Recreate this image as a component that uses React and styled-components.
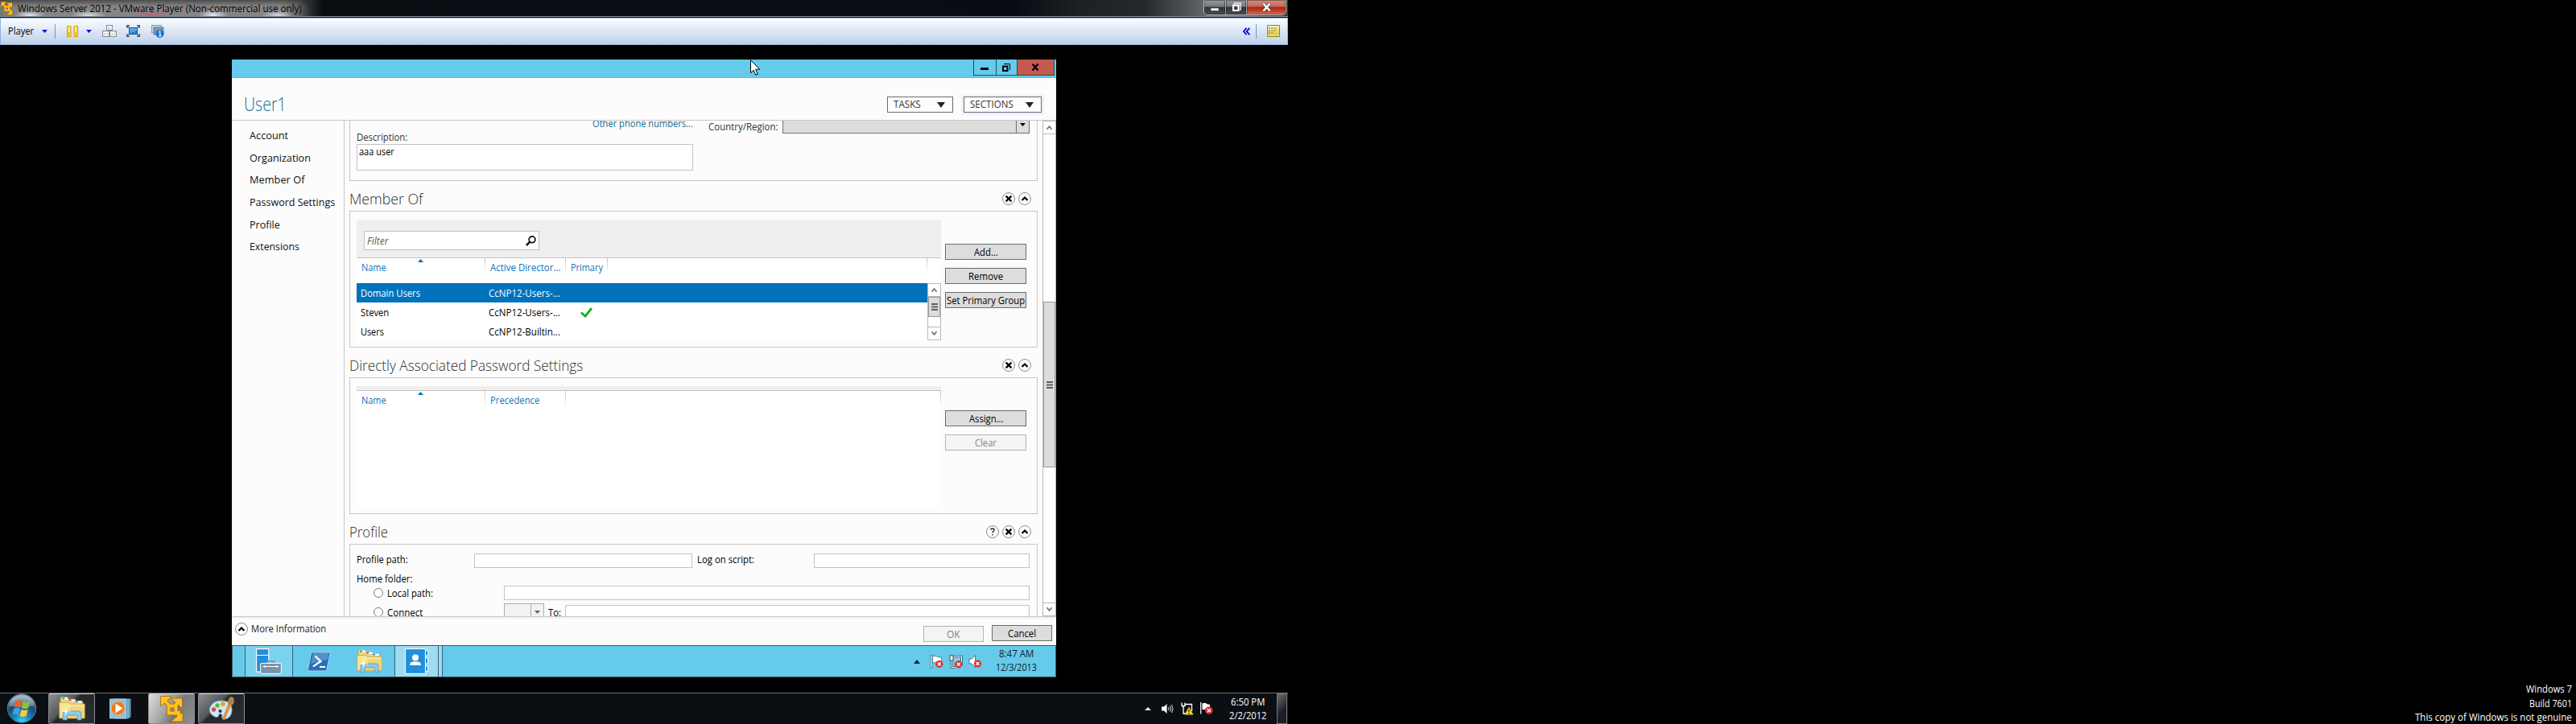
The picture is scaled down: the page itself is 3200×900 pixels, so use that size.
import React, { useLayoutEffect, useRef, useState } from "react";
import styled, { createGlobalStyle, css } from "styled-components";

const Global = createGlobalStyle`
  *, *::before, *::after { box-sizing: border-box; }
  html, body { margin: 0; padding: 0; background: #000; }
  body { width: 3200px; height: 900px; overflow: hidden; font-family: "Open Sans", "Noto Sans", sans-serif; font-size: 12px; color: #000; }
  svg { display: block; flex: none; }
`;

/* ---------- text ---------- */

const Line = styled.span`
  display: inline-block;
  white-space: pre;
  flex: none;
  font-size: ${(p) => p.$size || 12}px;
  font-weight: ${(p) => p.$weight || 400};
  font-style: ${(p) => (p.$italic ? "italic" : "normal")};
  color: ${(p) => p.$color || "inherit"};
  line-height: 16px;
  transform-origin: 0 50%;
`;

const Slot = styled.span`
  display: flex;
  align-items: center;
  flex: none;
  width: ${(p) => p.$w}px;
  height: 16px;
  line-height: 16px;
  white-space: nowrap;
`;

/* A label that tightens its glyphs so that it keeps the column width given in w. */
function Text({ w, size, weight, italic, color, children }) {
  const ref = useRef(null);
  const [scale, setScale] = useState(1);
  useLayoutEffect(() => {
    setScale(w / ref.current.offsetWidth);
  }, [w, children]);
  return (
    <Slot $w={w}>
      <Line ref={ref} $size={size} $weight={weight} $italic={italic} $color={color} style={{ transform: `scaleX(${scale})` }}>
        {children}
      </Line>
    </Slot>
  );
}

/* ---------- host desktop ---------- */

const Desktop = styled.div`
  display: grid;
  grid-template-columns: 1600px 1600px;
  width: 3200px;
  height: 900px;
  background: #000;
`;
const Primary = styled.div`
  display: flex;
  flex-direction: column;
  height: 900px;
`;
const Secondary = styled.div`
  display: flex;
  flex-direction: column;
  justify-content: flex-end;
  align-items: flex-end;
  padding: 0 5px 0 0;
  color: #fff;
`;
const MarkLine = styled.div`
  height: ${(p) => p.$h}px;
  display: flex;
  align-items: flex-start;
`;
const HostTitle = styled.div`
  display: flex;
  justify-content: space-between;
  height: 22px;
  flex: none;
  border-bottom: 1px solid #15161c;
  box-shadow: inset 0 -1px 0 #8d8f94;
  background: linear-gradient(90deg, #777 0, #858585 30px, #858585 350px, #666 370px, #2b2d30 385px, #0a0e13 400px, #080d14 1260px, #1d2024 1340px, #25282b 1420px, #55585a 1480px, #77797b 1520px, #3a3b3d 1600px);
`;
const HostCaption = styled.div`
  display: flex;
  align-items: center;
  gap: 5px;
  width: 384px;
  height: 20px;
  padding-top: 1px;
  background:
    radial-gradient(ellipse 20px 6px at 37px 19px, #dfe6f2, transparent),
    radial-gradient(ellipse 22px 6px at 110px 19px, #d5e3dc, transparent),
    radial-gradient(ellipse 26px 7px at 190px 19px, #b26a72, transparent),
    radial-gradient(ellipse 18px 7px at 265px 19px, #e2ecfb, transparent),
    radial-gradient(ellipse 20px 6px at 345px 19px, #d2dae6, transparent),
    linear-gradient(rgba(30, 30, 30, 0.55), rgba(30, 30, 30, 0) 8px);
`;
const HostControls = styled.div`
  display: flex;
  width: 103px;
  height: 19px;
  margin-right: 2px;
  border: 1px solid #b9bbbe;
  border-top: 0;
  border-radius: 0 0 5px 5px;
  overflow: hidden;
`;
const HostButton = styled.div`
  display: flex;
  align-items: center;
  justify-content: center;
  width: ${(p) => p.$w}px;
  border-right: 1px solid #a9abae;
  box-shadow: inset 0 0 0 1px rgba(0, 0, 0, 0.35);
  background: ${(p) =>
    p.$close
      ? "linear-gradient(#cf8f84 0, #c06a5c 45%, #a82412 50%, #c8442c 80%, #e0826a 100%)"
      : "linear-gradient(#97999c 0, #75787b 45%, #303336 50%, #4b4e51 100%)"};
  &:last-child { border-right: 0; }
`;
const Toolbar = styled.div`
  display: flex;
  align-items: center;
  justify-content: space-between;
  height: 34px;
  flex: none;
  padding: 0 9px 1px 9px;
  border: 1px solid #8fb0dc;
  background: linear-gradient(#fbfdfe 0, #e4edf8 35%, #d6e2f2 60%, #bed2ea 100%);
`;
const ToolGroup = styled.div`
  display: flex;
  align-items: center;
`;
const Gap = styled.span`
  flex: none;
  width: ${(p) => p.$w}px;
`;
const ToolRule = styled.span`
  width: 1px;
  height: 18px;
  background: #6f98cc;
`;
const Stage = styled.div`
  flex: none;
  height: 805px;
  padding: 18px 0 0 288px;
  background: #000;
`;

/* ---------- guest screen ---------- */

const Guest = styled.div`
  position: relative;
  display: flex;
  flex-direction: column;
  width: 1024px;
  height: 768px;
  background: #fcfcfc;
`;
const Pointer = styled.svg`
  position: absolute;
  left: 644px;
  top: 0;
`;
const GuestTitle = styled.div`
  display: flex;
  justify-content: flex-end;
  align-items: flex-start;
  height: 23px;
  flex: none;
  padding-right: 2px;
  background: #66caeb;
  border-bottom: 1px solid #72b3ce;
`;
const GuestButton = styled.div`
  display: flex;
  align-items: center;
  justify-content: center;
  width: ${(p) => p.$w}px;
  height: 20px;
  padding-right: ${(p) => (p.$close ? 1 : 2)}px;
  border: 1px solid #2b4a55;
  border-top: 0;
  border-right-width: ${(p) => (p.$close ? 1 : 0)}px;
  background: ${(p) => (p.$close ? "#c35a50" : "#66caeb")};
`;
const Header = styled.div`
  display: flex;
  justify-content: space-between;
  height: 53px;
  flex: none;
  padding: 21px 15px 0 15px;
  border-bottom: 1px solid #c9c9c9;
`;
const HeaderTitle = styled.div`
  padding-top: 3px;
`;
const HeaderMenus = styled.div`
  display: flex;
  gap: 10px;
  align-items: flex-start;
`;
const MenuButton = styled.div`
  display: flex;
  align-items: center;
  justify-content: space-between;
  width: ${(p) => p.$w}px;
  height: 20px;
  margin-top: 2px;
  margin-right: 3px;
  padding: 0 9px 0 7px;
  border: 1px solid #6c6c6c;
  background: #fdfdfd;
  box-shadow: ${(p) => (p.$focus ? "0 0 0 3px #edf1fd" : "none")};
`;
const Work = styled.div`
  display: flex;
  height: 616px;
  flex: none;
  overflow: hidden;
`;
const Nav = styled.div`
  display: flex;
  flex-direction: column;
  width: 140px;
  padding: 10px 0 0 22px;
  gap: 11.7px;
  border-right: 1px solid #c6c6c6;
  color: #111;
`;
const Sections = styled.div`
  width: 867px;
  height: 616px;
  padding: 0 6px;
  overflow: hidden;
`;
const Panel = styled.div`
  width: 855px;
  height: ${(p) => p.$h}px;
  border: 1px solid #c6c6c6;
  ${(p) => p.$open && css`border-top: 0;`}
  padding: ${(p) => p.$pad || "10px 8px 0"};
  display: flex;
`;
const SectionHead = styled.div`
  display: flex;
  align-items: center;
  justify-content: space-between;
  height: 37px;
  padding: 6px 8px 0 0;
`;
const HeadIcons = styled.div`
  display: flex;
  gap: 4px;
`;
const GeneralLeft = styled.div`
  display: flex;
  flex-direction: column;
  width: 418px;
`;
const PhoneRow = styled.div`
  display: flex;
  justify-content: flex-end;
  height: 17px;
  margin-top: -4px;
`;
const TextArea = styled.div`
  height: 33px;
  border: 1px solid #c3c3c3;
  background: #fff;
  padding: 1px 2px;
`;
const CountryRow = styled.div`
  display: flex;
  align-items: flex-start;
  padding: 0 0 0 19px;
`;
const CountryCombo = styled.div`
  display: flex;
  justify-content: flex-end;
  width: 307px;
  height: 16px;
  margin-left: 5px;
  border: 1px solid #707070;
  border-top: 0;
  background: #dddddd;
`;
const ComboArrow = styled.div`
  width: ${(p) => p.$w}px;
  border-left: 1px solid ${(p) => p.$line};
  display: flex;
  justify-content: center;
  padding-top: ${(p) => p.$top}px;
`;
const List = styled.div`
  display: flex;
  flex-direction: column;
  width: 726px;
  height: 150px;
  background: #fff;
`;
const FilterBar = styled.div`
  height: ${(p) => p.$h}px;
  flex: none;
  padding: ${(p) => (p.$h > 10 ? "14px 9px" : "0")};
  background: #efefef;
  border-bottom: 1px solid #c3c3c3;
`;
const FilterBox = styled.div`
  display: flex;
  align-items: center;
  justify-content: space-between;
  width: 218px;
  height: 24px;
  padding: 1px 3px 0 3px;
  border: 1px solid #c3c3c3;
  background: #fff;
`;
const Columns = styled.div`
  display: flex;
  height: ${(p) => p.$h}px;
  flex: none;
`;
const Column = styled.div`
  position: relative;
  width: ${(p) => p.$w}px;
  height: 20px;
  padding: 4px 0 0 6px;
  color: #0f72bc;
  background: linear-gradient(#c4c4c4, #fff) right / 1px 100% no-repeat;
`;
const SortMark = styled.svg`
  position: absolute;
  left: 76px;
  top: 1px;
`;
const ListBody = styled.div`
  display: flex;
  height: 71px;
`;
const Rows = styled.div`
  width: 709px;
`;
const Row = styled.div`
  display: grid;
  grid-template-columns: 159px 108px 60px;
  align-items: center;
  height: 24px;
  padding: 1px 0 0 5px;
  color: ${(p) => (p.$on ? "#fff" : "#000")};
  background: ${(p) => (p.$on ? "#0072bc" : "transparent")};
`;
const Cell = styled.div`
  padding-left: ${(p) => p.$l || 0}px;
`;
const Scrollbar = styled.div`
  display: flex;
  flex-direction: column;
  width: 17px;
  height: ${(p) => p.$h}px;
  border: 1px solid #b9b9b9;
  background: #fff;
`;
const ScrollEnd = styled.div`
  display: flex;
  align-items: center;
  justify-content: center;
  height: 16px;
  flex: none;
  ${(p) => (p.$down ? "border-top" : "border-bottom")}: 1px solid #b9b9b9;
`;
const Thumb = styled.div`
  display: flex;
  align-items: center;
  justify-content: center;
  flex: none;
  margin: ${(p) => p.$top}px 0 ${(p) => p.$bottom}px;
  height: ${(p) => p.$h}px;
  border: 1px solid #999;
  background: #dcdcdc;
`;
const Actions = styled.div`
  display: flex;
  flex-direction: column;
  gap: 10px;
  width: 101px;
  margin: 30px 0 0 5px;
`;
const Button = styled.div`
  display: flex;
  align-items: center;
  justify-content: center;
  width: ${(p) => p.$w || 101}px;
  height: 20px;
  padding-top: 1px;
  border: 1px solid ${(p) => (p.$off ? "#b0b5b5" : "#6c6c6c")};
  color: ${(p) => (p.$off ? "#838383" : "#000")};
  background: ${(p) => (p.$off ? "#f4f4f4" : "#dddddd")};
`;
const Form = styled.div`
  display: flex;
  flex-direction: column;
`;
const FormRow = styled.div`
  display: flex;
  height: ${(p) => p.$h}px;
  margin-top: ${(p) => p.$mt || 0}px;
  padding-left: ${(p) => p.$l || 0}px;
`;
const Lead = styled.div`
  display: flex;
  width: ${(p) => p.$w}px;
  padding-top: ${(p) => p.$t || 0}px;
  gap: 5px;
`;
const Input = styled.div`
  width: ${(p) => p.$w}px;
  height: 18px;
  border: 1px solid #c3c3c3;
  background: #fff;
  margin-top: ${(p) => p.$mt || 0}px;
`;
const DriveCombo = styled.div`
  display: flex;
  justify-content: flex-end;
  width: 50px;
  height: 20px;
  border: 1px solid #acacac;
  background: #f2f2f2;
`;
const Radio = styled.span`
  width: 12px;
  height: 12px;
  margin-top: 1px;
  border: 1px solid #7a7a7a;
  border-radius: 50%;
  background: #fff;
`;
const Footer = styled.div`
  display: flex;
  justify-content: space-between;
  height: 36px;
  flex: none;
  padding: 7px 5px 0 4px;
  border-top: 1px solid #c9c9c9;
  box-shadow: inset 0 2px 0 #f1f1f1;
`;
const More = styled.div`
  display: flex;
  gap: 4px;
`;
const DialogButtons = styled.div`
  display: flex;
  gap: 10px;
  padding-top: 3px;
`;
const Shift = styled.div`
  padding-top: ${(p) => p.$t}px;
`;
const GuestBar = styled.div`
  display: flex;
  height: 40px;
  flex: none;
  border: 1px solid #46595f;
  background: #66caeb;
  padding-left: 15px;
`;
const GuestApp = styled.div`
  display: flex;
  align-items: center;
  justify-content: center;
  width: ${(p) => p.$w}px;
  border: solid #2f6376;
  border-width: ${(p) => (p.$edge ? "0 1px" : "0")};
  background: ${(p) => p.$bg || "transparent"};
`;
const GuestStack = styled.div`
  width: 5px;
  background: #9fdcf1;
  border-right: 1px solid #2f6376;
`;
const GuestTray = styled.div`
  display: flex;
  margin-left: auto;
  color: #0c222c;
`;
const GuestClock = styled.div`
  display: flex;
  flex-direction: column;
  align-items: center;
  gap: 1px;
  width: 84px;
  padding-top: 2px;
`;
const TrayIcons = styled.div`
  display: flex;
  align-items: center;
`;

/* ---------- host taskbar ---------- */

const HostBar = styled.div`
  display: flex;
  height: 39px;
  flex: none;
  border-top: 1px solid #6b6e72;
  background: #0b0f14;
  color: #fff;
`;
const Start = styled.div`
  width: 60px;
  padding-left: 8px;
`;
const HostApp = styled.div`
  display: flex;
  align-items: center;
  justify-content: center;
  width: 58px;
  height: 38px;
  margin-right: 4px;
  padding-right: ${(p) => p.$nudge || 0}px;
  border-radius: 2px;
  border: 1px solid ${(p) => (p.$kind ? "#8b8d90" : "transparent")};
  border-top-color: ${(p) => (p.$kind ? "#d0d0d0" : "transparent")};
  background: ${(p) =>
    p.$kind === "active"
      ? "linear-gradient(120deg, #dedede 0, #a5a5a5 40%, #77797b 60%, #8c8e90 100%)"
      : p.$kind === "open"
      ? "linear-gradient(135deg, #8d8f92 0, #55585b 38%, #24272a 45%, #2b2e31 100%)"
      : "transparent"};
`;
const HostTray = styled.div`
  display: flex;
  margin-left: auto;
`;
const HostClock = styled.div`
  display: flex;
  flex-direction: column;
  align-items: center;
  gap: 1px;
  width: 72px;
  padding-top: 3px;
`;
const ShowDesktop = styled.div`
  width: 13px;
  margin-right: 1px;
  border: 1px solid #77797c;
  background: linear-gradient(135deg, #6b6e71, #1b1e22 60%);
`;

/* ---------- drawings ---------- */

const Tri = ({ w, h, color, up }) => (
  <svg width={w} height={h} viewBox="0 0 10 10" preserveAspectRatio="none">
    <path d={up ? "M0 10 5 0l5 10z" : "M0 0h10L5 10z"} fill={color} />
  </svg>
);
const Chevron = ({ down }) => (
  <svg width="9" height="7" viewBox="0 0 9 7">
    <path d={down ? "M1.5 1.2 4.5 5l3-3.8" : "M1.5 5.8l3-3.8 3 3.8"} fill="none" stroke="#707070" strokeWidth="1.7" />
  </svg>
);
const Grip = () => (
  <svg width="8" height="9" viewBox="0 0 8 9">
    <path d="M0 1h8M0 4.500h8M0 8h8" stroke="#606060" strokeWidth="2" />
  </svg>
);
const Round = ({ kind }) => (
  <svg width="16" height="16" viewBox="0 0 16 16">
    <circle cx="8" cy="8" r="7.500" fill="#fdfdfd" stroke="#8c8c8c" />
    {kind === "x" && <path d="M4.600 4.600l6.800 6.800M11.400 4.600l-6.800 6.800" stroke="#000" strokeWidth="2.200" />}
    {kind === "up" && <path d="M4.500 10 8 6.500l3.500 3.500" fill="none" stroke="#000" strokeWidth="2.200" />}
    {kind === "help" && (
      <path d="M5.900 5.600C6 3.400 10.200 3.400 10 5.700 9.900 7.300 8 7.300 8 9.600M8 11v1.600" fill="none" stroke="#222" strokeWidth="1.400" />
    )}
  </svg>
);
const VmArrows = () => (
  <>
    <path d="M10.500 12.500h9v9h-9z" />
    <path d="M5 5l6 7M23 7l-5 6M19 21h4v7" />
  </>
);
const VmHeads = () => <path d="M1 1h12l-3 3.500L4.500 9.500 1 12zM27 3.500V15l-4-3.500-5-4.500-4-3.500zM27.500 31.500H14.500l4-3.500 4.500-3 4.500-4z" />;
const VmLogo = ({ size }) => (
  <svg width={size} height={size} viewBox="0 0 29 33">
    <g fill="none" stroke="#a86a05" strokeWidth="5.600"><VmArrows /></g>
    <g fill="#a86a05" stroke="#a86a05" strokeWidth="1.600"><VmHeads /></g>
    <g fill="none" stroke="#ffc024" strokeWidth="3.800"><VmArrows /></g>
    <g fill="#ffc024"><VmHeads /></g>
  </svg>
);
const PauseIcon = () => (
  <svg width="14" height="14" viewBox="0 0 14 14">
    <path d="M.5.5h4.500v13H.5zM9 .5h4.500v13H9z" fill="#fbe27a" stroke="#d49b08" />
    <path d="M1 8h4v5H1zM9.500 8h4v5h-4z" fill="#f3c613" />
  </svg>
);
const KeysIcon = () => (
  <svg width="18" height="15" viewBox="0 0 18 15">
    <g fill="#e8e8ea" stroke="#8b8d92">
      <rect x="5.500" y=".5" width="7" height="6" />
      <rect x=".5" y="7.500" width="8" height="7" />
      <rect x="9.500" y="7.500" width="8" height="7" />
    </g>
    <path d="M7.500 2.500h3M2.500 9.500h3M11.500 9.500h3" stroke="#fff" strokeWidth="2" />
    <path d="M8 3.500h1M3 10.500h1M12 10.500h1" stroke="#999" />
  </svg>
);
const FullIcon = () => (
  <svg width="17" height="15" viewBox="0 0 17 15">
    <rect x="3.500" y="3.500" width="10" height="8" fill="#2a7fd6" stroke="#17539e" />
    <path d="M4 4h9v3L4 10z" fill="#5aa5ea" />
    <path d="M.7 4V.7H4M13 .7h3.300V4M.7 11v3.300H4M13 14.300h3.300V11M1 1l2 2M16 1l-2 2M1 14l2-2M16 14l-2-2" fill="none" stroke="#46566a" strokeWidth="1.300" />
  </svg>
);
const InfoIcon = () => (
  <svg width="16" height="16" viewBox="0 0 16 16">
    <rect x=".5" y=".5" width="12" height="9" fill="#cdd6e2" stroke="#8a99ad" />
    <rect x="3" y="3" width="12" height="9" fill="#8395ad" stroke="#6c7f98" />
    <circle cx="10.500" cy="11" r="5" fill="#1b73cb" />
    <path d="M9.300 10h1.700v3.500M9 13.700h3.500" fill="none" stroke="#fff" strokeWidth="1.200" />
    <circle cx="10.500" cy="8" r=".9" fill="#fff" />
  </svg>
);
const NoteIcon = () => (
  <svg width="16" height="15" viewBox="0 0 16 15">
    <path d="M.5.5h15v14H.5z" fill="#e6d964" stroke="#8c8432" />
    <path d="M1 1h14v3L1 7z" fill="#f4edb0" />
    <path d="M2 4.200h2M2 10.200h2" stroke="#d86a4b" strokeWidth="1.600" />
    <path d="M2 7.200h2" stroke="#5a8cd8" strokeWidth="1.600" />
    <path d="M5 4h7M5 7h6M5 10h4" stroke="#837b3e" strokeDasharray="2 .7" />
    <path d="M11 14v-3h4" fill="#fff8c4" stroke="#b9ae50" />
  </svg>
);
const FolderIcon = ({ w, h }) => (
  <svg width={w} height={h} viewBox="0 0 32 29">
    <path d="M2 2h8l1 2h8l1 2h9v20H2z" fill="#f1d778" stroke="#b5973c" strokeWidth=".8" />
    <path d="M3 .8h8v3H3zM11 3h9v3h-9zM19 5h9v3h-9z" fill="#fff" stroke="#c9b878" strokeWidth=".5" />
    <path d="M4 1.300h3v1.800H4z" fill="#21b036" />
    <path d="M12 3.300h3v1.800h-3z" fill="#d4412c" />
    <path d="M20 5.300h3v1.800h-3z" fill="#2f8fe0" />
    <path d="M.8 7h11l2 1.800h17.400V26H.8z" fill="#f9e694" stroke="#c4a44c" strokeWidth=".8" />
    <path d="M14 12h17v14H8z" fill="#ecca62" opacity=".6" />
    <path d="M5 28V20.500Q5 17.500 8 17.500H24Q27 17.500 27 20.500V28H22.500V22.500H10V28z" fill="#8ecbe8" stroke="#4f9cc6" strokeWidth=".8" />
    <path d="M8.500 12.500v10M4 17.500h10" stroke="#fff" strokeWidth=".9" />
    <circle cx="8.500" cy="17.500" r="1.800" fill="#fff" />
  </svg>
);
const RedX = ({ x, y, r = 4.6 }) => (
  <g>
    <circle cx={x} cy={y} r={r} fill="#dd2a2a" />
    <path d={`M${x - 2} ${y - 2}l4 4M${x + 2} ${y - 2}l-4 4`} stroke="#fff" strokeWidth="1.5" />
  </g>
);
const Search = () => (
  <svg width="13" height="13" viewBox="0 0 13 13">
    <circle cx="8" cy="4.800" r="3.900" fill="none" stroke="#111" strokeWidth="1.700" />
    <path d="M5.300 7.600.9 12" stroke="#111" strokeWidth="2.500" />
  </svg>
);
const Check = () => (
  <svg width="15" height="13" viewBox="0 0 15 13">
    <path d="M1 6.500l5 4.500L14 1.200" fill="none" stroke="#0caf10" strokeWidth="2.700" />
  </svg>
);
const ServerIcon = () => (
  <svg width="32" height="32" viewBox="0 0 32 32">
    <path d="M.6.6h15.200v28.500H.6z" fill="#218fdc" stroke="#fff" strokeWidth="1.100" />
    <path d="M.6 8.500h15.200" stroke="#fff" />
    <path d="M14.500 18v-2h8v2" fill="none" stroke="#8094a8" strokeWidth="2" />
    <rect x="5.600" y="18.500" width="25.800" height="12.900" rx="1.500" fill="#7a93ab" stroke="#fff" />
    <path d="M8.500 22.500h19.500" stroke="#fff" />
    <circle cx="11" cy="22.500" r="1.200" fill="#fff" />
    <circle cx="26" cy="22.500" r="1.200" fill="#fff" />
  </svg>
);
const ShellIcon = () => (
  <svg width="30" height="25" viewBox="0 0 30 25">
    <path d="M7 1h21q1.500 0 1 1.500L25 22q-.4 2-2 2H3q-2 0-1.500-2L5.500 2.500Q6 1 7 1z" fill="#2b6fb5" stroke="#a8d2ee" />
    <path d="M8 2h19.500L26 10Q15 12 5 15z" fill="#5f9fd6" opacity=".7" />
    <path d="M10.500 5.500l7 6.500-9.500 6.500M16 19h7" fill="none" stroke="#fff" strokeWidth="2.200" />
  </svg>
);
const ContactsIcon = () => (
  <svg width="30" height="32" viewBox="0 0 30 32">
    <path d="M25.500 2.500h3V9h-3zM25.500 12h3v7h-3zM25.500 22h3v6.500h-3z" fill="#218fdc" stroke="#fff" />
    <rect x=".6" y=".6" width="24.800" height="30.800" fill="#218fdc" stroke="#fff" />
    <circle cx="13" cy="11.500" r="4" fill="#fff" />
    <path d="M6 21q0-4.500 4.500-4.500h5Q20 16.500 20 21z" fill="#fff" />
  </svg>
);
const GuestFlag = () => (
  <svg width="17" height="17" viewBox="0 0 17 17">
    <path d="M1 .5h2v15.500H1z" fill="#fff" stroke="#3d6d80" strokeWidth=".8" />
    <path d="M3.500 2q3-1.500 5 0t6 1v7h-6q-2-1-5 0z" fill="#fff" stroke="#3d6d80" strokeWidth=".8" />
    <RedX x={11.800} y={11.500} />
  </svg>
);
const GuestNet = () => (
  <svg width="17" height="17" viewBox="0 0 17 17">
    <path d="M5 2h10.500v9.500H6" fill="#7fd0ea" stroke="#2b5568" strokeWidth="2.600" />
    <path d="M3 6v9.500h5" fill="none" stroke="#2b5568" strokeWidth="2.600" />
    <path d="M5 2h10.500v9.500H6M3 6v9.500h5" fill="none" stroke="#fff" strokeWidth="1" />
    <rect x="1" y="1" width="4" height="6" fill="#fff" stroke="#2b5568" />
    <RedX x={11.800} y={11.800} />
  </svg>
);
const GuestSound = () => (
  <svg width="17" height="17" viewBox="0 0 17 17">
    <path d="M1 5h3l4.500-4.500v15L4 11H1z" fill="#fff" stroke="#3d6d80" strokeWidth=".9" />
    <RedX x={11.500} y={11} />
  </svg>
);
const Orb = () => (
  <svg width="38" height="38" viewBox="0 0 38 38">
    <defs>
      <radialGradient id="orb" cx="50%" cy="95%" r="85%">
        <stop offset="0" stopColor="#2fd6ff" />
        <stop offset=".35" stopColor="#1583bb" />
        <stop offset=".7" stopColor="#1b4a6e" />
        <stop offset="1" stopColor="#7f9db3" />
      </radialGradient>
    </defs>
    <circle cx="19" cy="18.500" r="17.700" fill="url(#orb)" stroke="#5b7a8c" />
    <path d="M4 15a15 13 0 0 1 30 0q-15 5-30 0z" fill="#fff" opacity=".25" />
    <path d="M11.500 9.500q4-2.500 8 0l-2 8q-4-2.500-8 0z" fill="#e8612a" />
    <path d="M20.800 10q4 2.300 8.200.3l-2 8q-4 2-8.200-.3z" fill="#8fc33c" />
    <path d="M9.200 19q4-2.500 8 0l-2 8q-4-2.500-8 0z" fill="#3f9fe0" />
    <path d="M18.500 19.700q4 2.300 8.200.3l-2 8q-4 2-8.200-.3z" fill="#f8c93a" />
  </svg>
);
const MediaIcon = () => (
  <svg width="27" height="26" viewBox="0 0 27 26">
    <path d="M4 1h22v22l-3 2H6z" fill="#4a8fb8" stroke="#9bd0ea" strokeWidth=".7" />
    <path d="M23 2v22" stroke="#b8e0f2" />
    <path d="M.5 1h20v24H.5z" fill="#8dc0dd" stroke="#b9dff0" strokeWidth=".8" />
    <circle cx="10.500" cy="12.500" r="8.500" fill="#ee7a1c" stroke="#fbc07f" strokeWidth=".8" />
    <path d="M7.500 6.500l9 6-9 6z" fill="#fff" />
  </svg>
);
const PaintIcon = () => (
  <svg width="33" height="32" viewBox="0 0 33 32">
    <path d="M2 14Q6 5 18 6q12 1 11 13-1 9-9 10-4 0-3-4 0-4-4-2-1 5-5 3Q-1 22 2 14z" fill="#cfe6f3" stroke="#6ba7c8" />
    <circle cx="6.500" cy="17" r="2.700" fill="#e24a35" />
    <circle cx="11" cy="12" r="2.700" fill="#5bb54b" />
    <circle cx="18" cy="10" r="2.900" fill="#efa62c" />
    <circle cx="14.500" cy="19" r="2" fill="#18354a" />
    <path d="M29 9 19.500 30l-2-1L25.500 8z" fill="#e99a3c" stroke="#b56b1d" strokeWidth=".6" />
    <path d="M24 8q0-6 5-7 4 2 2.500 8-1.500 3-4 2.500-3 0-3.500-3.500z" fill="#b5824e" />
  </svg>
);
const HostSound = () => (
  <svg width="15" height="14" viewBox="0 0 15 14">
    <path d="M0 4.500h3L6.500 1v12L3 9.500H0z" fill="#fff" />
    <path d="M8.500 5q1 2 0 4M10.500 3.500q2 3.500 0 7M12.500 2q3 5 0 10" fill="none" stroke="#ddd" strokeWidth="1" />
  </svg>
);
const HostNet = () => (
  <svg width="16" height="16" viewBox="0 0 16 16">
    <path d="M5 2.500h8.500V11M3 6v8h4" fill="none" stroke="#fff" strokeWidth="1.300" />
    <path d="M1 .5v4h4v-4M3 4v3" fill="none" stroke="#fff" strokeWidth="1.300" />
    <path d="M10 5.500l5.500 10h-11z" fill="#f6cf25" />
    <path d="M10 9v3M10 13v1.500" stroke="#222" strokeWidth="1.300" />
  </svg>
);
const HostFlag = () => (
  <svg width="16" height="16" viewBox="0 0 16 16">
    <path d="M.7 0v14.500" stroke="#fff" strokeWidth="1.200" />
    <path d="M2.500 1.500q3-1.500 5 0t4.500 1.200V9H2.500z" fill="#fff" />
    <RedX x={10.800} y={10.200} r={4.800} />
  </svg>
);

/* ---------- data ---------- */

const NAV = [["Account", 48], ["Organization", 76], ["Member Of", 68], ["Password Settings", 106], ["Profile", 37.5], ["Extensions", 61.5]];
const GROUPS = [
  { name: "Domain Users", nw: 74, folder: "CcNP12-Users-...", on: true },
  { name: "Steven", nw: 35.5, folder: "CcNP12-Users-...", primary: true },
  { name: "Users", nw: 29, folder: "CcNP12-Builtin..." },
];

const SectionTitle = ({ title, w, icons }) => (
  <SectionHead>
    <Text w={w} size={18.5} weight={300} color="#2c2c2c">{title}</Text>
    <HeadIcons>{icons.map((k) => <Round key={k} kind={k} />)}</HeadIcons>
  </SectionHead>
);

export default function App() {
  return (
    <>
      <Global />
      <Desktop>
        <Primary>
          <HostTitle>
            <HostCaption>
              <VmLogo size={17} />
              <Text w={353} size={12} color="#000">Windows Server 2012 - VMware Player (Non-commercial use only)</Text>
            </HostCaption>
            <HostControls>
              <HostButton $w={27}>
                <svg width="12" height="12" viewBox="0 0 12 12"><path d="M1 7h10v3.500H1z" fill="#fff" stroke="#444" strokeWidth=".7" /></svg>
              </HostButton>
              <HostButton $w={26}>
                <svg width="12" height="12" viewBox="0 0 12 12"><path d="M3.500 2V.8h7.700v8H10" fill="none" stroke="#fff" strokeWidth="1.200" /><path d="M2 3.500h6.500v6.500H2z" fill="none" stroke="#fff" strokeWidth="2.200" /></svg>
              </HostButton>
              <HostButton $w={48} $close>
                <svg width="13" height="12" viewBox="0 0 13 12"><path d="M2.500 1.500l8 9M10.500 1.500l-8 9" stroke="#444" strokeWidth="4" /><path d="M2.500 1.500l8 9M10.500 1.500l-8 9" stroke="#fff" strokeWidth="2.600" /></svg>
              </HostButton>
            </HostControls>
          </HostTitle>
          <Toolbar>
            <ToolGroup>
              <Text w={32.500} size={12}>Player</Text>
              <Gap $w={9.500} />
              <Tri w={7} h={4} color="#1010c8" />
              <Gap $w={9} />
              <ToolRule />
              <Gap $w={14} />
              <PauseIcon />
              <Gap $w={10} />
              <Tri w={7} h={4} color="#1010c8" />
              <Gap $w={13} />
              <KeysIcon />
              <Gap $w={12} />
              <FullIcon />
              <Gap $w={14} />
              <InfoIcon />
            </ToolGroup>
            <ToolGroup>
              <svg width="9" height="10" viewBox="0 0 9 10"><path d="M4.500.8.900 5l3.600 4.200M8.300.8 4.700 5l3.600 4.200" fill="none" stroke="#0000e0" strokeWidth="1.800" /></svg>
              <Gap $w={7} />
              <ToolRule />
              <Gap $w={13} />
              <NoteIcon />
            </ToolGroup>
          </Toolbar>
          <Stage>
            <Guest>
              <GuestTitle>
                <GuestButton $w={28}>
                  <svg width="10" height="8" viewBox="0 0 10 8"><path d="M0 4h10v3H0z" /></svg>
                </GuestButton>
                <GuestButton $w={26}>
                  <svg width="10" height="10" viewBox="0 0 10 10"><path d="M1 3.500h5.500V9H1z" fill="none" stroke="#000" strokeWidth="2" /><path d="M2 .5h7.500V8" fill="none" stroke="#000" /></svg>
                </GuestButton>
                <GuestButton $w={47} $close>
                  <svg width="10" height="9" viewBox="0 0 10 9"><path d="M1.500.5l7 8M8.500.5l-7 8" stroke="#000" strokeWidth="2.200" /></svg>
                </GuestButton>
              </GuestTitle>
              <Header>
                <HeaderTitle>
                  <Text w={53} size={24} weight={300} color="#146d8c">User1</Text>
                </HeaderTitle>
                <HeaderMenus>
                  <MenuButton $w={82}><Text w={34} color="#333">TASKS</Text><Tri w={10} h={7} color="#222" /></MenuButton>
                  <MenuButton $w={97} $focus><Text w={54} color="#333">SECTIONS</Text><Tri w={10} h={7} color="#222" /></MenuButton>
                </HeaderMenus>
              </Header>
              <Work>
                <Nav>
                  {NAV.map(([t, w]) => <Text key={t} w={w} size={13}>{t}</Text>)}
                </Nav>
                <Sections>
                  <Panel $h={75} $open $pad="0 8px">
                    <GeneralLeft>
                      <PhoneRow><Text w={125} color="#146d8c">Other phone numbers...</Text></PhoneRow>
                      <Text w={63} color="#333">Description:</Text>
                      <TextArea><Text w={44}>aaa user</Text></TextArea>
                    </GeneralLeft>
                    <CountryRow>
                      <Shift $t={-2}><Text w={87} color="#333">Country/Region:</Text></Shift>
                      <CountryCombo>
                        <ComboArrow $w={16} $line="#707070" $top={3}><Tri w={7} h={4} color="#000" /></ComboArrow>
                      </CountryCombo>
                    </CountryRow>
                  </Panel>

                  <SectionTitle title="Member Of" w={91} icons={["x", "up"]} />
                  <Panel $h={170}>
                    <List>
                      <FilterBar $h={48}>
                        <FilterBox><Text w={26} italic color="#555">Filter</Text><Search /></FilterBox>
                      </FilterBar>
                      <Columns $h={31}>
                        <Column $w={160}><Text w={31}>Name</Text><SortMark width="7" height="4" viewBox="0 0 7 4"><path d="M0 4 3.500 0 7 4z" fill="#0072bc" /></SortMark></Column>
                        <Column $w={100}><Text w={87}>Active Director...</Text></Column>
                        <Column $w={52}><Text w={40}>Primary</Text></Column>
                        <Column $w={397} />
                      </Columns>
                      <ListBody>
                        <Rows>
                          {GROUPS.map((g) => (
                            <Row key={g.name} $on={g.on}>
                              <Text w={g.nw}>{g.name}</Text>
                              <Text w={88.500}>{g.folder}</Text>
                              <Cell $l={6}>{g.primary && <Check />}</Cell>
                            </Row>
                          ))}
                        </Rows>
                        <Scrollbar $h={71}>
                          <ScrollEnd><Chevron /></ScrollEnd>
                          <Thumb $top={0} $bottom={12} $h={25}><Grip /></Thumb>
                          <ScrollEnd $down><Chevron down /></ScrollEnd>
                        </Scrollbar>
                      </ListBody>
                    </List>
                    <Actions>
                      <Button><Text w={30}>Add...</Text></Button>
                      <Button><Text w={43}>Remove</Text></Button>
                      <Button><Text w={97}>Set Primary Group</Text></Button>
                    </Actions>
                  </Panel>

                  <SectionTitle title="Directly Associated Password Settings" w={290} icons={["x", "up"]} />
                  <Panel $h={170}>
                    <List>
                      <FilterBar $h={6} />
                      <Columns $h={31}>
                        <Column $w={160}><Text w={31}>Name</Text><SortMark width="7" height="4" viewBox="0 0 7 4"><path d="M0 4 3.500 0 7 4z" fill="#0072bc" /></SortMark></Column>
                        <Column $w={100}><Text w={61}>Precedence</Text></Column>
                        <Column $w={466} />
                      </Columns>
                    </List>
                    <Actions>
                      <Button><Text w={42}>Assign...</Text></Button>
                      <Button $off><Text w={27}>Clear</Text></Button>
                    </Actions>
                  </Panel>

                  <SectionTitle title="Profile" w={48} icons={["help", "x", "up"]} />
                  <Panel $h={140} $pad="11px 8px 0">
                    <Form>
                      <FormRow $h={18}>
                        <Lead $w={146}><Text w={63.500}>Profile path:</Text></Lead>
                        <Input $w={271} />
                        <Gap $w={6} />
                        <Lead $w={145}><Text w={71}>Log on script:</Text></Lead>
                        <Input $w={268} />
                      </FormRow>
                      <FormRow $h={16} $mt={6}><Text w={69}>Home folder:</Text></FormRow>
                      <FormRow $h={18} $l={21}>
                        <Lead $w={162} $t={2}><Radio /><Text w={57}>Local path:</Text></Lead>
                        <Input $w={653} />
                      </FormRow>
                      <FormRow $h={20} $mt={4} $l={21}>
                        <Lead $w={162} $t={4}><Radio /><Text w={44}>Connect</Text></Lead>
                        <DriveCombo><ComboArrow $w={16} $line="#acacac" $top={8}><Tri w={7} h={4} color="#666" /></ComboArrow></DriveCombo>
                        <Gap $w={5} />
                        <Lead $w={21} $t={4}><Text w={16}>To:</Text></Lead>
                        <Input $w={577} $mt={2} />
                      </FormRow>
                    </Form>
                  </Panel>
                </Sections>
                <Scrollbar $h={616}>
                  <ScrollEnd><Chevron /></ScrollEnd>
                  <Thumb $top={208} $bottom={168} $h={206}><Grip /></Thumb>
                  <ScrollEnd $down><Chevron down /></ScrollEnd>
                </Scrollbar>
              </Work>
              <Footer>
                <More>
                  <Round kind="up" />
                  <Text w={93} color="#222">More Information</Text>
                </More>
                <DialogButtons>
                  <Shift $t={1}><Button $w={75} $off><Text w={17}>OK</Text></Button></Shift>
                  <Button $w={75}><Text w={35}>Cancel</Text></Button>
                </DialogButtons>
              </Footer>
              <GuestBar>
                <GuestApp $w={60} $edge $bg="#7bd2ee"><ServerIcon /></GuestApp>
                <GuestApp $w={64}><ShellIcon /></GuestApp>
                <GuestApp $w={62}><FolderIcon w={32} h={30} /></GuestApp>
                <GuestApp $w={55} $edge $bg="#9fdcf1"><ContactsIcon /></GuestApp>
                <GuestStack />
                <GuestTray>
                  <TrayIcons>
                    <Tri w={8} h={5} color="#14252c" up />
                    <Gap $w={12} />
                    <GuestFlag />
                    <Gap $w={7} />
                    <GuestNet />
                    <Gap $w={7} />
                    <GuestSound />
                  </TrayIcons>
                  <GuestClock>
                    <Text w={43}>8:47 AM</Text>
                    <Text w={51}>12/3/2013</Text>
                  </GuestClock>
                  <Gap $w={7} />
                </GuestTray>
              </GuestBar>
              <Pointer width="13" height="21" viewBox="0 0 13 21">
                <path d="M.5.7v16l3.700-3.500 2.500 6 2.500-1-2.500-6h5z" fill="#fff" stroke="#000" />
              </Pointer>
            </Guest>
          </Stage>
          <HostBar>
            <Start><Orb /></Start>
            <HostApp $kind="open"><FolderIcon w={33} h={30} /></HostApp>
            <HostApp $nudge={3}><MediaIcon /></HostApp>
            <HostApp $kind="active"><VmLogo size={33} /></HostApp>
            <HostApp $kind="open"><PaintIcon /></HostApp>
            <HostTray>
              <TrayIcons>
                <Tri w={8} h={4} color="#e8e8e8" up />
                <Gap $w={13} />
                <HostSound />
                <Gap $w={9} />
                <HostNet />
                <Gap $w={8} />
                <HostFlag />
              </TrayIcons>
              <Gap $w={7} />
              <HostClock>
                <Text w={42.500}>6:50 PM</Text>
                <Text w={46.500}>2/2/2012</Text>
              </HostClock>
              <ShowDesktop />
            </HostTray>
          </HostBar>
        </Primary>
        <Secondary>
          <MarkLine $h={18}><Text w={57}>Windows 7</Text></MarkLine>
          <MarkLine $h={17}><Text w={53}>Build 7601</Text></MarkLine>
          <MarkLine $h={16}><Text w={195}>This copy of Windows is not genuine</Text></MarkLine>
        </Secondary>
      </Desktop>
    </>
  );
}
